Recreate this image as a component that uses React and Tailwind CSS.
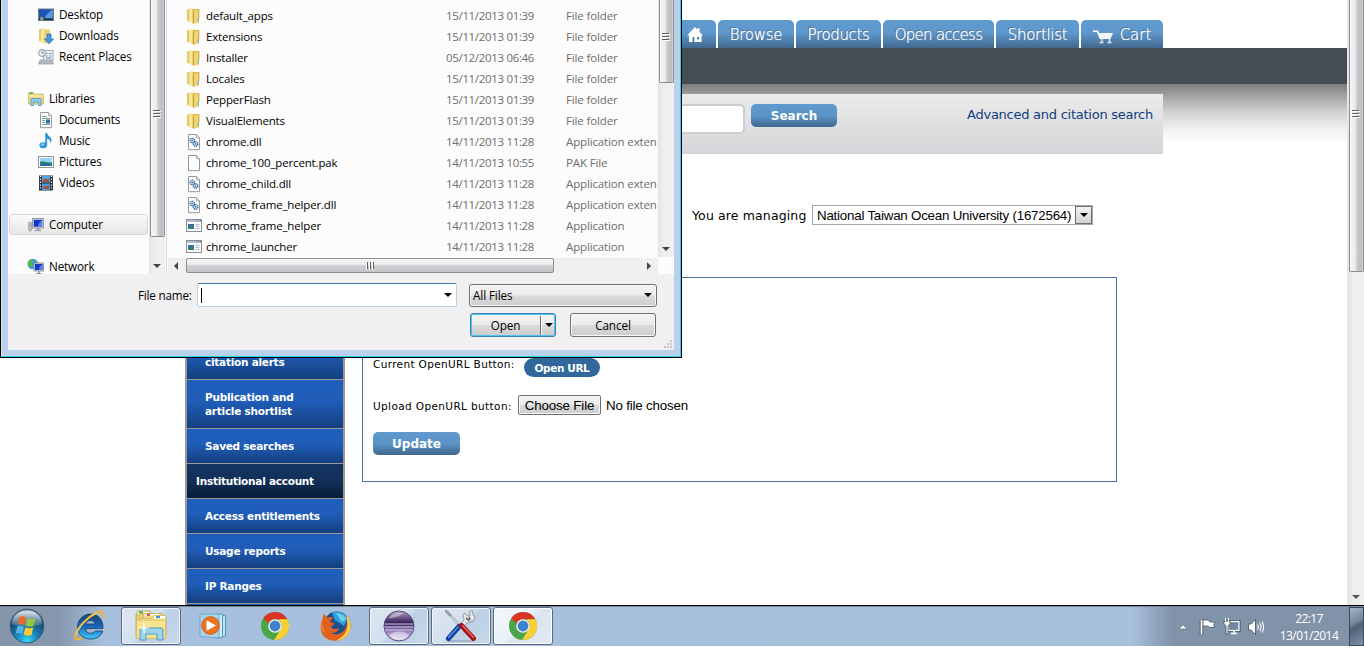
import React from "react";

const UI = "font-['Open_Sans',sans-serif]";
const WEB = "font-['DejaVu_Sans',sans-serif]";

/* ---------- small icons ---------- */

function Folder() {
  return (
    <svg width="15" height="18" viewBox="0 0 16 18" preserveAspectRatio="none" className="shrink-0">
      <path d="M1 2.500 6 1.500V15L1 14Z" fill="#e6c95f" />
      <path d="M3.500 2 8 1V16.500L3.500 15Z" fill="#f6e7a0" />
      <path d="M7 2h6.500v13.500L8 16.500 7 16Z" fill="#dfbd4f" />
      <path d="M8.500 4 13.500 2.500V15L8.500 16.500Z" fill="#f0d672" />
      <path d="M13 11v3.500" stroke="#5aa9e0" strokeWidth="1.200" />
      <path d="M8 4.200V16.400M13.700 2v9" stroke="#b9942f" strokeWidth=".8" />
    </svg>
  );
}

function Page({ children }) {
  return (
    <svg width="16" height="18" viewBox="0 0 16 18" className="shrink-0">
      <path d="M2.500 1.500h8l3 3.200v12h-11Z" fill="#fdfdfd" stroke="#98989c" />
      <path d="M10.500 1.500v3.200h3" fill="#e4e4e6" stroke="#98989c" strokeWidth=".8" />
      {children}
    </svg>
  );
}

function Dll() {
  return (
    <Page>
      <circle cx="6.300" cy="7.500" r="2.300" fill="#cfe0ef" stroke="#3d6f9f" strokeWidth="1.300" strokeDasharray="1.300 .6" />
      <circle cx="9.600" cy="11" r="2.300" fill="#cfe0ef" stroke="#2f6497" strokeWidth="1.300" strokeDasharray="1.300 .6" />
      <circle cx="6.300" cy="7.500" r=".7" fill="#2c5f92" />
      <circle cx="9.600" cy="11" r=".7" fill="#2c5f92" />
    </Page>
  );
}

function AppIcon() {
  return (
    <svg width="16" height="18" viewBox="0 0 16 18" className="shrink-0">
      <rect x=".5" y="2.500" width="15" height="12" fill="#fbfbfc" stroke="#8a8f96" />
      <path d="M1 4h14" stroke="#b4c4d6" strokeWidth="2" />
      <path d="M10 3.800h1M12 3.800h1M14 3.800h1" stroke="#4c6c94" />
      <rect x="2" y="7" width="6" height="5" fill="#2f7d74" />
      <path d="M2 7h6v2H2z" fill="#3c6aa8" />
      <path d="M9.500 7.500h4M9.500 9.500h4M9.500 11.500h4" stroke="#b7bcc2" />
    </svg>
  );
}

function DesktopIcon() {
  return (
    <svg width="16" height="16" viewBox="0 0 16 16" className="shrink-0">
      <rect x=".5" y="2" width="15" height="11.500" fill="#3b5d8c" stroke="#6d7f95" />
      <rect x="1.200" y="2.700" width="13.600" height="8.600" fill="#1c52b4" />
      <path d="M7 11.300c1-4 4-7 7.800-8.300v8.300Z" fill="#5d97de" />
      <path d="M1 12.400h14" stroke="#1d2c48" strokeWidth="1.600" />
      <rect x="2" y="10" width="1.600" height="1.600" fill="#e7782a" />
      <rect x="3.600" y="10" width="1.600" height="1.600" fill="#84c441" />
      <rect x="2" y="11.600" width="1.600" height="1.600" fill="#4ea6ea" />
      <rect x="3.600" y="11.600" width="1.600" height="1.600" fill="#f3ca37" />
    </svg>
  );
}

function DownloadsIcon() {
  return (
    <svg width="16" height="16" viewBox="0 0 16 16" className="shrink-0">
      <path d="M1 1.500 6 .5V14L1 13Z" fill="#e6cb66" />
      <path d="M3 2 6.500 .8V15.500L3 14Z" fill="#f6e7a2" />
      <path d="M6 1.500h6V14l-5 1.500H6Z" fill="#ecd272" />
      <path d="M9 6h4v5h2.600L11 15.800 6.400 11H9Z" fill="#3c9be2" stroke="#1f6fb4" strokeWidth=".7" />
    </svg>
  );
}

function RecentIcon() {
  return (
    <svg width="16" height="16" viewBox="0 0 16 16" className="shrink-0">
      <rect x="5.500" y="1.500" width="9.500" height="10" fill="#edf1f5" stroke="#a0a9b3" />
      <path d="M7.500 4.500h2M11 4.500h2.500M7.500 7h2M11 7h2.500M8 9.200h5" stroke="#6a9bcc" strokeWidth="1.200" />
      <path d="M2 11h12l1.500 4H.5Z" fill="#b4b7bc" stroke="#95989d" strokeWidth=".7" />
      <circle cx="4" cy="4" r="3.300" fill="#f3f5f7" stroke="#a0a6ad" strokeWidth="1.200" />
      <path d="M4 2v2h1.700" stroke="#6c7681" fill="none" />
    </svg>
  );
}

function LibrariesIcon() {
  return (
    <svg width="16" height="16" viewBox="0 0 16 16" className="shrink-0">
      <path d="M.5 2h5l1 1.300h9V13H.5Z" fill="#f0d880" stroke="#cbb058" strokeWidth=".8" />
      <path d="M1.500 1.300H5v1.500H1.500Z" fill="#4faf46" />
      <path d="M1 5h14.200" stroke="#fbf2c4" />
      <path d="M3 14.500v-6q0-1 1-1h8q1 0 1 1v6h-2.600V11H5.600v3.500Z" fill="#8dccee" stroke="#4a9aca" strokeWidth=".8" />
    </svg>
  );
}

function DocumentsIcon() {
  return (
    <Page>
      <path d="M4 5.500h5M4 7.500h8M4 9.500h3M4 11.500h3M4 13.500h8" stroke="#79a08e" />
      <rect x="8" y="8.500" width="4" height="4" fill="#2f6fc2" />
    </Page>
  );
}

function MusicIcon() {
  return (
    <svg width="16" height="18" viewBox="0 0 16 18" className="shrink-0">
      <ellipse cx="5.200" cy="13.200" rx="3.800" ry="3" fill="#2f93dc" />
      <ellipse cx="4.500" cy="12.500" rx="1.800" ry="1.200" fill="#8fd0f5" />
      <path d="M7.300 1h1.800c.3 3 4.400 3.800 4.400 7 0 1.600-.6 2.600-1.300 3.300.6-2.700-1-4-3.100-4.700v6.800H7.300Z" fill="#2b8fda" />
    </svg>
  );
}

function PicturesIcon() {
  return (
    <svg width="16" height="16" viewBox="0 0 16 16" className="shrink-0">
      <rect x=".5" y="2.500" width="15" height="11" fill="#fff" stroke="#8f959b" />
      <rect x="2" y="4" width="12" height="8" fill="#9ad3f5" />
      <path d="M2 8c3-2 6 1 12 .5V12H2Z" fill="#2c8176" />
      <path d="M2 11c4-1.500 8-1.500 12 0v1H2Z" fill="#2a66a8" />
    </svg>
  );
}

function VideosIcon() {
  return (
    <svg width="16" height="16" viewBox="0 0 16 16" className="shrink-0">
      <rect x="1" y=".5" width="14" height="15" fill="#2b2f35" />
      <rect x="4" y="1" width="8" height="6.500" fill="#58a6e4" />
      <rect x="4" y="8.500" width="8" height="6.500" fill="#4b96d8" />
      <path d="M5 5c2-3 4 1 6-2v4H5ZM5 12c2-2 4 1 6-2v4H6Z" fill="#a9503c" />
      <path d="M2.500 1v14M13.500 1v14" stroke="#f4f4f4" strokeWidth="1.300" strokeDasharray="1.300 1.500" />
    </svg>
  );
}

function ComputerIcon() {
  return (
    <svg width="16" height="16" viewBox="0 0 16 16" className="shrink-0">
      <rect x=".8" y="5" width="2.600" height="9" rx="1" fill="#c9ccd1" stroke="#7d828a" strokeWidth=".7" />
      <path d="M1.500 8.500h1.300" stroke="#47b04a" />
      <rect x="4.500" y="1.500" width="11" height="9.500" fill="#d4d7dc" stroke="#878c94" strokeWidth=".8" />
      <rect x="5.800" y="2.800" width="8.400" height="6.900" fill="#1234c2" />
      <path d="M10 9.700c0-3 2-5.500 4.200-6.500v6.500Z" fill="#5f83ec" />
      <path d="M8.500 11h3l.5 2h1.500v1.300h-7V13H8Z" fill="#a3a8b0" />
    </svg>
  );
}

function NetworkIcon() {
  return (
    <svg width="17" height="17" viewBox="0 0 17 17" className="shrink-0">
      <circle cx="5.800" cy="6" r="5.300" fill="#3f9be0" />
      <path d="M1 4.500C2 2 4 1 6 1c1 1.500-1 2-1 3.500s2 1.500 1 3-2 0-3 1-2-1.500-2-4ZM8 2l2.500 2-1.500 1Z" fill="#54b848" />
      <rect x="7" y="5" width="9.500" height="8" fill="#d7dade" stroke="#7c8494" strokeWidth=".8" />
      <rect x="8" y="6" width="7.500" height="6" fill="#1538c0" />
      <path d="M12 12c0-3 1.500-4.500 3.500-5.500V12Z" fill="#5b80ea" />
      <path d="M11 13.200h1.500v2h2v1H9v-1h2Z" fill="#7d86a0" />
    </svg>
  );
}

/* ---------- file dialog ---------- */

const NAV = [
  ["Desktop", DesktopIcon, 38],
  ["Downloads", DownloadsIcon, 38],
  ["Recent Places", RecentIcon, 38],
  null,
  ["Libraries", LibrariesIcon, 28],
  ["Documents", DocumentsIcon, 38],
  ["Music", MusicIcon, 38],
  ["Pictures", PicturesIcon, 38],
  ["Videos", VideosIcon, 38],
  null,
  ["Computer", ComputerIcon, 28],
  null,
  ["Network", NetworkIcon, 28],
];

const FILES = [
  ["default_apps", "15/11/2013 01:39", "File folder", Folder],
  ["Extensions", "15/11/2013 01:39", "File folder", Folder],
  ["Installer", "05/12/2013 06:46", "File folder", Folder],
  ["Locales", "15/11/2013 01:39", "File folder", Folder],
  ["PepperFlash", "15/11/2013 01:39", "File folder", Folder],
  ["VisualElements", "15/11/2013 01:39", "File folder", Folder],
  ["chrome.dll", "14/11/2013 11:28", "Application exten", Dll],
  ["chrome_100_percent.pak", "14/11/2013 10:55", "PAK File", Page],
  ["chrome_child.dll", "14/11/2013 11:28", "Application exten", Dll],
  ["chrome_frame_helper.dll", "14/11/2013 11:28", "Application exten", Dll],
  ["chrome_frame_helper", "14/11/2013 11:28", "Application", AppIcon],
  ["chrome_launcher", "14/11/2013 11:28", "Application", AppIcon],
];

function Down({ className = "" }) {
  return (
    <svg width="8" height="4" viewBox="0 0 8 4" className={className}>
      <path d="M0 0h8L4 4Z" fill="currentColor" />
    </svg>
  );
}

function Grip({ vertical = false }) {
  return (
    <svg width="8" height="8" viewBox="0 0 8 8" className={vertical ? "rotate-90" : ""}>
      <path d="M0 .5h7M0 3.500h7M0 6.500h7" stroke="#5f5f5f" />
      <path d="M1 1.500h7M1 4.500h7M1 7.500h7" stroke="#fff" />
    </svg>
  );
}

const THUMB_V = "border border-t-0 border-[#8e8e8e] rounded-b-[2px] bg-[linear-gradient(90deg,#f7f7f7_0%,#e9e9eb_45%,#c9cacd_52%,#bdbec2_90%,#dcdcde_100%)]";
const TRACK_V = "bg-[linear-gradient(90deg,#e3e3e3,#eeeeee_30%,#f0f0f0)]";

function NavPane() {
  return (
    <div className="flex h-[274px] w-[160px] bg-[#fcfcfc]">
      <div className="flex w-[141px] flex-col overflow-hidden pt-1">
        {NAV.map((n, i) => {
          if (!n) return <div key={i} className="h-[21px] shrink-0" />;
          const [label, Icon, x] = n;
          const sel = label === "Computer";
          return (
            <div
              key={i}
              className={
                "ml-px flex h-[21px] w-[139px] shrink-0 items-center rounded-[3px] border text-[11.700px] text-black " +
                (sel ? "border-[#d9d9d9] bg-linear-to-b from-[#fafafa] to-[#e6e6e6] " : "border-transparent ") +
                (x === 38 ? "pl-[27px]" : "pl-[17px]")
              }
            >
              <span className="flex w-[17px] justify-center"><Icon /></span>
              <span className="ml-[5px] pt-px whitespace-nowrap tracking-[-0.15px]">{label}</span>
            </div>
          );
        })}
      </div>
      <div className={"flex w-[16px] flex-col items-center justify-between " + TRACK_V}>
        <div className={"flex h-[237px] w-[15px] flex-col items-center pt-[110px] " + THUMB_V}><Grip /></div>
        <Down className="mb-[6px] text-[#444]" />
      </div>
      <div className="ml-px w-px bg-[#c9dff2]" />
    </div>
  );
}

function FilePane() {
  return (
    <div className="flex h-[274px] w-[506px] bg-[#fcfcfc]">
      <div className="flex w-[490px] flex-col">
        <div className="h-[258px] pt-[5px]">
          {FILES.map(([name, date, type, Icon]) => (
            <div key={name} className="flex h-[21px] items-center text-[11.500px] whitespace-nowrap">
              <span className="ml-[18px] w-5"><Icon /></span>
              <span className="w-[240px] pt-px tracking-[-0.16px] text-black">{name}</span>
              <span className="w-[120px] pt-px tracking-[-0.33px] text-[#6d6d6d]">{date}</span>
              <span className="w-[92px] pt-px tracking-[-0.14px] text-[#6d6d6d]">{type}</span>
            </div>
          ))}
        </div>
        <div className="flex h-4 items-start bg-[#efefef]">
          <span className="w-[18px] pt-[4px] pl-[6px] text-[#444]">
            <svg width="4" height="8" viewBox="0 0 4 8"><path d="M4 0v8L0 4Z" fill="currentColor" /></svg>
          </span>
          <div className="flex h-[15px] w-[368px] items-center justify-center rounded-[2px] border border-[#8e8e8e] bg-[linear-gradient(180deg,#f7f7f7_0%,#e9e9eb_45%,#cfcfd2_52%,#c4c5c8_100%)]">
            <Grip vertical />
          </div>
          <span className="ml-auto pt-[4px] pr-[7px] text-[#444]">
            <svg width="4" height="8" viewBox="0 0 4 8"><path d="M0 0v8L4 4Z" fill="currentColor" /></svg>
          </span>
        </div>
      </div>
      <div className="flex w-4 flex-col">
        <div className={"flex h-[257px] flex-col items-center justify-between " + TRACK_V}>
          <div className={"flex h-[83px] w-[15px] flex-col items-center pt-[33px] " + THUMB_V}><Grip /></div>
          <Down className="mb-[6px] text-[#444]" />
        </div>
      </div>
    </div>
  );
}

const BTN = "bg-[linear-gradient(180deg,#f3f3f3_0%,#ebebeb_48%,#dadada_52%,#cdcdcd_100%)]";
const RIM = " shadow-[inset_0_0_0_1px_#f8f8f8] ";
const RIM_DEFAULT = " shadow-[inset_0_0_0_1px_#48c8f0] ";

function DialogFooter() {
  return (
    <div className="h-[76px] bg-[#f0f0f0] text-[11.700px] text-black">
      <div className="flex items-center pt-[9px]">
        <span className="ml-[130px] w-[59px] pt-px tracking-[-0.2px] whitespace-nowrap">File name:</span>
        <div className="flex h-6 w-[260px] items-center justify-between rounded-[2px] border border-[#b5d4ee] border-t-[#3e7cb0] bg-white pr-1 pl-[3px]">
          <span className="h-[15px] w-px bg-black" />
          <Down />
        </div>
        <div className={"ml-3 flex h-[23px] w-[188px] items-center justify-between rounded-[3px] border border-[#707070] pr-1 pl-[3px] " + BTN + RIM}>
          <span className="pt-px tracking-[-0.1px]">All Files</span>
          <Down />
        </div>
      </div>
      <div className="flex items-center pt-[6px]">
        <div className={"ml-[462px] flex h-6 w-[86px] items-center rounded-[3px] border border-[#3c7fb1] " + BTN + RIM_DEFAULT}>
          <span className="w-[69px] pt-px text-center tracking-[-0.1px]">Open</span>
          <span className="h-[19px] w-[2px] border-r border-white bg-[#707070]" />
          <Down className="ml-[3px]" />
        </div>
        <div className={"ml-[14px] flex h-6 w-[86px] items-center justify-center rounded-[3px] border border-[#707070] pt-px tracking-[-0.1px] " + BTN + RIM}>Cancel</div>
      </div>
      <svg width="8" height="8" viewBox="0 0 8 8" className="mt-[3px] ml-[656px]">
        <path d="M6 0h2v2H6zM3 3h2v2H3zM6 3h2v2H6zM0 6h2v2H0zM3 6h2v2H3zM6 6h2v2H6z" fill="#c9c9c9" />
      </svg>
    </div>
  );
}

function FileDialog() {
  return (
    <div className={"absolute top-0 left-0 h-[358px] w-[682px] overflow-hidden border border-t-0 border-black bg-[#b9d1ea] " + UI}>
      <div className="h-[357px] border-r border-b border-l border-[#2fd0ea] border-l-[#dbe8f5]">
        <div className="ml-[6px] w-[666px]">
          <div className="flex">
            <NavPane />
            <FilePane />
          </div>
          <DialogFooter />
        </div>
      </div>
    </div>
  );
}

/* ---------- web page ---------- */

const TAB =
  "flex h-7 items-center justify-center rounded-t-[5px] bg-[linear-gradient(180deg,#6099cd_0%,#5f98cc_45%,#42688c_100%)] text-[15px] font-extralight text-white [text-shadow:0_0_1px_#fff,-1px_-1px_0_#44698f] whitespace-nowrap pt-[2px]";

const BLUE_BTN =
  "rounded-[5px] bg-[linear-gradient(180deg,#5f9ace_0%,#5b93c7_50%,#3f678c_100%)] pt-px text-[12px] font-bold text-white";

function HomeIcon() {
  return (
    <svg width="17" height="16" viewBox="0 0 17 16">
      <path d="M8 0 0 8.500h2V15h3.500v-5h2v5H15V8.500h1L12.500 5V1h-2v2Z" fill="#fff" />
      <path d="M10 10h2v2.500h-2z" fill="#4d7ba8" />
      <path d="M14.500 8.500V15" stroke="#b9c9d8" />
    </svg>
  );
}

function CartIcon() {
  return (
    <svg width="20" height="14" viewBox="0 0 20 14">
      <path d="M5 3h15l-2.500 6H7.500Z" fill="#f2f5f8" />
      <path d="M0 1.200h4.500L7.500 9" fill="none" stroke="#fff" strokeWidth="1.600" />
      <path d="M9 9v3.500M16.500 9v3.500" stroke="#e8eef4" strokeWidth="1.300" />
      <path d="M6.500 12.500h4M14.500 12.500h4" stroke="#d9e2ec" strokeWidth="1.600" />
    </svg>
  );
}

function Header() {
  return (
    <header>
      <nav className="flex gap-[2px] pt-5 pl-[656px]">
        <div className={TAB + " w-[60px] pl-[18px]"}><HomeIcon /></div>
        <div className={TAB + " w-[76px] tracking-[-0.3px]"}>Browse</div>
        <div className={TAB + " w-[85px] tracking-[-0.35px]"}>Products</div>
        <div className={TAB + " w-[111px] tracking-[-0.7px]"}>Open access</div>
        <div className={TAB + " w-[83px] tracking-[-0.3px]"}>Shortlist</div>
        <div className={TAB + " w-[82px] gap-[7px]"}><span className="pt-1"><CartIcon /></span>Cart</div>
      </nav>
      <div className="h-9 bg-[#454c53]" />
      <div className="h-[57px] bg-[linear-gradient(180deg,#7d7d7d_0%,#a5a5a5_22%,#d2d2d2_50%,#f0f0f0_78%,#fcfcfc_100%)] pt-[10px]">
        <div className="ml-[185px] flex h-[60px] w-[978px] items-start bg-linear-to-b from-[#ebebeb] to-[#d4d5d8] pt-[10px]">
          <div className="ml-[200px] h-[30px] w-[360px] rounded-[5px] border-2 border-[#cdcdcd] bg-white" />
          <button className={"ml-[6px] h-[23px] w-[86px] " + BLUE_BTN}>Search</button>
          <a className="mt-px ml-auto pr-[10px] text-[13px] tracking-[-0.25px] whitespace-nowrap text-[#123c82]">Advanced and citation search</a>
        </div>
      </div>
    </header>
  );
}

const ITEM =
  "flex items-center border-b border-[#999] bg-[linear-gradient(180deg,#1f5fbb_0%,#1f5db8_45%,#153f7e_100%)] pl-[18px] text-[10.500px] leading-[14px] font-bold text-white whitespace-nowrap tracking-[-0.25px]";

function Sidebar() {
  return (
    <aside className="ml-[185px] h-[275px] w-[160px] overflow-hidden border-x-2 border-[#999]">
      <div className={ITEM + " h-[50px]"}><span>Journal and<br />citation alerts</span></div>
      <div className={ITEM + " h-[49px]"}><span>Publication and<br />article shortlist</span></div>
      <div className={ITEM + " h-[35px]"}>Saved searches</div>
      <div className="flex h-[35px] items-center border-b border-[#999] bg-[linear-gradient(180deg,#14345f_0%,#12305a_45%,#081d3b_100%)] pt-px pl-[9px] text-[10.500px] font-bold tracking-[-0.25px] whitespace-nowrap text-white">Institutional account</div>
      <div className={ITEM + " h-[35px]"}>Access entitlements</div>
      <div className={ITEM + " h-[35px]"}>Usage reports</div>
      <div className={ITEM + " h-[35px]"}>IP Ranges</div>
      <div className={ITEM + " h-[35px]"} />
    </aside>
  );
}

function WebPage() {
  return (
    <div className={"h-[605px] w-[1347px] overflow-hidden bg-white text-black " + WEB}>
      <Header />
      <div className="mt-[64px] ml-[692px] flex h-5 items-center text-[12.500px]">
        <span className="w-[120px] pt-[2px] tracking-[0.13px] whitespace-nowrap">You are managing</span>
        <div className="flex h-5 w-[281px] items-center justify-between border border-[#a5a5aa] bg-white pl-1 font-['Liberation_Sans',sans-serif] text-[13.333px]">
          <span className="pt-px tracking-[-0.22px] whitespace-nowrap">National Taiwan Ocean University (1672564)</span>
          <span className="flex h-[18px] w-[17px] items-center justify-center border border-[#707070] bg-linear-to-b from-[#f4f4f4] to-[#d2d2d2]">
            <Down />
          </span>
        </div>
      </div>
      <div className="flex">
        <div className="mt-[105px]"><Sidebar /></div>
        <section className="mt-[52px] ml-[17px] h-[205px] w-[755px] border border-[#4a6da7] pt-[80px] pl-[10px] text-[10.500px]">
          <div className="flex h-[19px] items-center">
            <span className="w-[151px] pb-[5px] tracking-[0.35px] whitespace-nowrap">Current OpenURL Button:</span>
            <span className="h-[19px] w-[76px] rounded-[10px] bg-[#31679b] pt-px text-center text-[10.500px] leading-[18px] font-bold tracking-[-0.4px] text-white">Open URL</span>
          </div>
          <div className="mt-[18px] flex h-5 items-center">
            <span className="w-[145px] pt-[4px] tracking-[0.38px] whitespace-nowrap">Upload OpenURL button:</span>
            <button className={"h-5 w-[83px] rounded-[2px] border border-[#707070] pt-px font-['Liberation_Sans',sans-serif] text-[13.333px] leading-[17px] tracking-[-0.15px] whitespace-nowrap " + BTN + RIM}>Choose File</button>
            <span className="ml-[5px] pt-[2px] font-['Liberation_Sans',sans-serif] text-[13.333px] tracking-[-0.17px]">No file chosen</span>
          </div>
          <button className={"mt-[17px] block h-[23px] w-[87px] " + BLUE_BTN}>Update</button>
        </section>
      </div>
    </div>
  );
}

function PageScrollbar() {
  return (
    <div className={"flex h-[605px] w-[17px] flex-col items-center justify-between border-l border-[#e8e8e8] " + TRACK_V}>
      <div className={"flex h-[272px] w-[15px] flex-col items-center pt-[110px] " + THUMB_V}><Grip /></div>
      <Down className="mb-[6px] text-[#555]" />
    </div>
  );
}

/* ---------- taskbar ---------- */

function StartOrb() {
  return (
    <svg width="36" height="36" viewBox="0 0 36 36">
      <defs>
        <radialGradient id="orb" cx=".5" cy=".95" r=".85">
          <stop offset="0" stopColor="#35d6ff" />
          <stop offset=".4" stopColor="#1583b9" />
          <stop offset=".8" stopColor="#1e4a6c" />
          <stop offset="1" stopColor="#5f7d94" />
        </radialGradient>
        <linearGradient id="orbTop" x2="0" y2="1">
          <stop offset="0" stopColor="#fff" stopOpacity=".75" />
          <stop offset="1" stopColor="#fff" stopOpacity=".15" />
        </linearGradient>
      </defs>
      <circle cx="18" cy="18" r="16.800" fill="url(#orb)" stroke="#2f5a78" />
      <path d="M3 16C4 7 10 2.500 18 2.500S32 7 33 16c-8 3-22 3-30 0Z" fill="url(#orbTop)" />
      <path d="M10.500 9c2.500-1.300 4.500-1 6.500.3L15.300 17c-2-1.200-4-1.400-6.500-.3Z" fill="#ee6a2b" />
      <path d="M18.300 10c2.300 1.300 5 1.500 8 .2L24.500 18c-2.500 1-5 .8-7.800-.3Z" fill="#93c83e" />
      <path d="M8.400 18.300c2.400-1 4.500-.8 6.500.4l-1.700 7.300c-2-1.200-4-1.400-6.400-.4Z" fill="#58b4ec" />
      <path d="M16.300 19.200c2.500 1.300 5.200 1.400 7.900.4L22.500 27c-2.600 1-5.200.9-7.800-.5Z" fill="#fbc932" />
    </svg>
  );
}

function IeIcon() {
  return (
    <svg width="34" height="34" viewBox="0 0 34 34">
      <defs>
        <linearGradient id="ie" x2="0" y2="1">
          <stop offset="0" stopColor="#1d3f66" />
          <stop offset=".5" stopColor="#1768bb" />
          <stop offset="1" stopColor="#45c8fa" />
        </linearGradient>
      </defs>
      <path d="M31 19.500H13.500c0 3 2.200 4.800 5 4.800 2 0 3.600-.6 4.600-2.300h7.700C29 27.500 24.500 30 18.500 30 11 30 5.500 25 5.500 18S11.300 5 18.500 5 31.500 10 31 19.500Zm-8-4.500c-.3-2.200-2.200-3.500-4.600-3.500s-4.400 1.300-4.900 3.500Z" fill="url(#ie)" stroke="#17406f" strokeWidth=".8" />
      <path d="M30.500 9C32.500 3.500 30 .8 24 4 15 8.500 6 18 3.500 25.500 2 30.500 5.500 31.500 10 28.500" fill="none" stroke="#efb42e" strokeWidth="2" />
      <path d="M24 4.500C15 9 7 18 4 25.500" fill="none" stroke="#fbe07e" strokeWidth=".8" />
    </svg>
  );
}

function ExplorerIcon() {
  return (
    <svg width="34" height="32" viewBox="0 0 34 32">
      <path d="M2 4h1V2q0-1 1-1h12l2 3v24H2Z" fill="#e7cd70" stroke="#b99a3d" strokeWidth=".7" />
      <path d="M3.500 1.700h12v2h-12zM11 3.700h16v2H11zM19.500 5.700h11v2h-11z" fill="#fff" />
      <path d="M5 1.500h4v2H5z" fill="#2eae3d" />
      <path d="M9 3.500h19l2 3v22H9Z" fill="#eed884" stroke="#c4a64a" strokeWidth=".7" />
      <path d="M11 4h14v1.800H11z" fill="#fff" />
      <path d="M13 3.800h3v2h-3z" fill="#d8402f" />
      <path d="M20 5.500h11q1 0 1 1v21H6V8.500h12Z" fill="#f8eaa4" stroke="#c9ad54" strokeWidth=".7" />
      <path d="M20.500 6h10.500v2H20.500z" fill="#fff" />
      <path d="M22 6h4v2h-4z" fill="#3a92dc" />
      <path d="M2.500 10h29v18.500h-29Z" fill="#f6e491" stroke="#cdb25a" strokeWidth=".7" />
      <path d="M6 30V20q0-2 2-2h19q2 0 2 2v10h-6v-6H12v6Z" fill="#9fd3ec" stroke="#4a9bc4" />
      <path d="M10 13v10M5 18h10" stroke="#fff" strokeWidth="1.100" />
      <circle cx="10" cy="18" r="1.800" fill="#fff" />
    </svg>
  );
}

function MediaIcon() {
  return (
    <svg width="30" height="28" viewBox="0 0 30 28">
      <path d="M20 2.500 26.500 3.500V24L20 26Z" fill="#bfe2f2" stroke="#5499be" />
      <path d="M17 2 23.500 2.500V25L17 26Z" fill="#d4edf8" stroke="#5499be" />
      <path d="M1 2h19v24L1 24.500Z" fill="#a9d5ec" stroke="#6ba9ca" />
      <circle cx="11.500" cy="13.500" r="8.800" fill="#ef7421" stroke="#d65a10" />
      <path d="M7.500 8.200v10.600l9.500-5.300Z" fill="#fff" />
    </svg>
  );
}

function ChromeIcon() {
  return (
    <svg width="30" height="30" viewBox="0 0 30 30">
      <circle cx="15" cy="15" r="14" fill="#4aa648" />
      <path d="M15 1a14 14 0 0 1 12.300 7.300H15a6.800 6.800 0 0 0-6.200 4.200L3.200 7.600A14 14 0 0 1 15 1Z" fill="#dc3327" />
      <path d="M27.300 8.300A14 14 0 0 1 14 29l6.700-10.500A6.800 6.800 0 0 0 19 9.300v-1Z" fill="#fbd033" />
      <circle cx="15" cy="15" r="6.800" fill="#f3f3f3" />
      <circle cx="15" cy="15" r="5.400" fill="#3f82cb" />
    </svg>
  );
}

function FirefoxIcon() {
  return (
    <svg width="32" height="32" viewBox="0 0 32 32">
      <circle cx="17" cy="15" r="13.500" fill="#1b4f8f" />
      <path d="M12 3c6-3 13-.5 16 5l-4 8-9-6Z" fill="#2fa3dc" />
      <path d="M16 3c4 0 8 2 10 6l-4 3Z" fill="#6fd0f2" />
      <path d="M26 4.500c5.500 5.500 6.500 15 .5 21.500S9.500 32 4 26.500C0 22.500-.3 14 2.500 9l.7-5C5 5 6 6 7.500 7.500 10 6.500 12 7 13.500 8c-1.500 1-3 2-3.300 3.500.3 1.500 3.300 1 4.300 1.500-.2 2-2.500 2.500-3.500 3.500 1.500 3.500 5.500 3 8.500 1-1 4-5 6-8.500 5.500C17 26 24 23 26 17c1.500-4.500 1-8.500 0-12.500Z" fill="#e0611e" />
      <path d="M26 4.500c5.500 5.500 6.500 15 .5 21.500-3 3-7 4.500-10.500 4.500 8-4 12-9 11.500-17-.2-3.500-.6-6-1.500-9Z" fill="#fbcf45" />
      <path d="M2.500 9c-1 6 0 11 4.500 15-5-2-7-8-4.500-15Z" fill="#f39a33" />
    </svg>
  );
}

function EclipseIcon() {
  return (
    <svg width="32" height="32" viewBox="0 0 32 32">
      <defs>
        <linearGradient id="ecl" x2="0" y2="1">
          <stop offset="0" stopColor="#b3a6c8" />
          <stop offset=".25" stopColor="#644d86" />
          <stop offset=".42" stopColor="#2f1a50" />
          <stop offset=".6" stopColor="#8168a8" />
          <stop offset="1" stopColor="#e9defa" />
        </linearGradient>
      </defs>
      <circle cx="16" cy="16" r="15" fill="url(#ecl)" stroke="#5d4a80" />
      <path d="M2 14h28M1.500 17h29M2 20h28" stroke="#d9cdec" strokeWidth="1.200" />
      <ellipse cx="16" cy="25.500" rx="9" ry="4" fill="#fff" opacity=".45" />
      <path d="M6 8C9 3 15 2 20 3c-3 3-8 5-14 5Z" fill="#fff" opacity=".4" />
    </svg>
  );
}

function ToolsIcon() {
  return (
    <svg width="32" height="32" viewBox="0 0 32 32">
      <path d="M4 31h24" stroke="#7f8b9a" strokeWidth="1.300" opacity=".6" />
      <path d="M2.500 2 15 16" stroke="#8f9499" strokeWidth="2.200" strokeLinecap="round" />
      <path d="M2.500 2 15 16" stroke="#eceef0" strokeWidth="1.100" strokeLinecap="round" />
      <path d="m1 1 4 4" stroke="#9a9ea3" strokeWidth="2.800" strokeLinecap="round" />
      <path d="M18 5 20 3l3 3h2l-.5-4.500 3-1L28 5l2 2-2 4.500-5 .5-5 5-3-2.500 4-5Z" fill="#e3e5e7" stroke="#83888d" strokeWidth=".8" />
      <path d="m21 8 3 2.500M24 7l1 3" stroke="#44494f" strokeWidth="1.200" />
      <path d="M14 16.500 3.500 28.500" stroke="#123f9d" strokeWidth="5" strokeLinecap="round" />
      <path d="M13 17 3.500 27.500" stroke="#5a92ea" strokeWidth="1.300" strokeLinecap="round" />
      <path d="M16.500 15.500 28.500 28.500" stroke="#a51419" strokeWidth="5" strokeLinecap="round" />
      <path d="M17.800 15.800 28.500 27.500" stroke="#ec6a66" strokeWidth="1.300" strokeLinecap="round" />
    </svg>
  );
}

const SLOT = "flex h-[38px] w-[60px] items-center justify-center";
const TILE = SLOT + " rounded-[3px] border border-[#5b6a7e] shadow-[inset_0_0_0_1px_#eef4fa] bg-[linear-gradient(135deg,#dfe8f2_0%,#d3e0ee_45%,#bccfe4_55%,#c9d9ea_100%)]";
const TILE_ON = SLOT + " rounded-[3px] border border-[#5b6a7e] shadow-[inset_0_0_0_1px_#fff] bg-[linear-gradient(135deg,#f4f8fc_0%,#e9f0f7_45%,#d8e4f0_55%,#e3ecf5_100%)]";

function Taskbar() {
  return (
    <div className={"flex h-[41px] w-[1364px] items-start border-t border-black bg-[linear-gradient(90deg,#8495aa_0px,#8798ae_60px,#a7c0dd_105px,#a7c0dc_1132px,#8193a9_1172px,#8193a9_1364px)] " + UI}>
      <div className="flex h-10 w-full items-start gap-[2px] border-t border-[#76869a] pl-[9px]">
        <div className="mt-px flex w-[50px]"><StartOrb /></div>
        <div className={SLOT + " pr-[4px]"}><IeIcon /></div>
        <div className={TILE + " -ml-[2px]"}><ExplorerIcon /></div>
        <div className={SLOT + " pl-[2px]"}><MediaIcon /></div>
        <div className={SLOT}><ChromeIcon /></div>
        <div className={SLOT + " pr-[2px]"}><FirefoxIcon /></div>
        <div className={TILE}><EclipseIcon /></div>
        <div className={TILE}><ToolsIcon /></div>
        <div className={TILE_ON}><ChromeIcon /></div>
        <div className="ml-auto flex h-10 items-start text-white">
          <svg width="10" height="6" viewBox="0 0 10 6" className="mt-[17px]">
            <path d="M1 5 5 .8 9 5Z" fill="#fff" stroke="#55657a" strokeWidth=".6" />
          </svg>
          <svg width="18" height="18" viewBox="0 0 18 18" className="mt-[11px] ml-[11px]">
            <path d="M2.500 1v16" stroke="#3f4b5b" strokeWidth="3.500" />
            <path d="M4 2h5l2 2h5c-2 3-1 4 0 5.500h-5L9 8H4Z" fill="#fff" stroke="#4c596a" strokeWidth=".8" />
            <path d="M2.500 1.500v15" stroke="#fff" strokeWidth="1.800" />
          </svg>
          <svg width="18" height="18" viewBox="0 0 18 18" className="mt-[11px] ml-[6px]">
            <rect x="5" y="3.500" width="11" height="9" fill="#73879f" stroke="#3f4b5b" strokeWidth="3" />
            <rect x="5" y="3.500" width="11" height="9" fill="#73879f" stroke="#fff" strokeWidth="1.300" />
            <path d="M8 15.500h6M11 13v2" stroke="#fff" strokeWidth="1.500" />
            <path d="M1 3h6v3L5 8v8H3V8L1 6Z" fill="#fff" stroke="#46535f" strokeWidth=".8" />
            <path d="M2.500 0v3M5.500 0v3" stroke="#fff" />
          </svg>
          <svg width="18" height="18" viewBox="0 0 18 18" className="mt-[11px] ml-[6px]">
            <path d="M1.500 6H4l4.500-4.500v15L4 12H1.500Z" fill="#fff" stroke="#4c596a" strokeWidth=".9" />
            <path d="M10.500 6.500q1.500 2.500 0 5M12.800 5q2.400 4 0 8M15 3.500q3.200 5.500 0 11" fill="none" stroke="#fff" strokeWidth="1.100" />
          </svg>
          <div className="ml-[9px] flex w-[70px] flex-col items-center text-[12px] leading-[17px]">
            <span className="mt-[3px] tracking-[-0.6px]">22:17</span>
            <span className="tracking-[-0.5px]">13/01/2014</span>
          </div>
          <div className="ml-[5px] h-[39px] w-[15px] border border-[#39485a] bg-[linear-gradient(150deg,#a9b7c6_0%,#74869a_40%,#4f6176_50%,#7f92a8_100%)]" />
        </div>
      </div>
    </div>
  );
}

export default function App() {
  return (
    <div className="relative h-[666px] w-[1364px] overflow-hidden bg-white">
      <div className="flex">
        <WebPage />
        <PageScrollbar />
      </div>
      <Taskbar />
      <FileDialog />
    </div>
  );
}
